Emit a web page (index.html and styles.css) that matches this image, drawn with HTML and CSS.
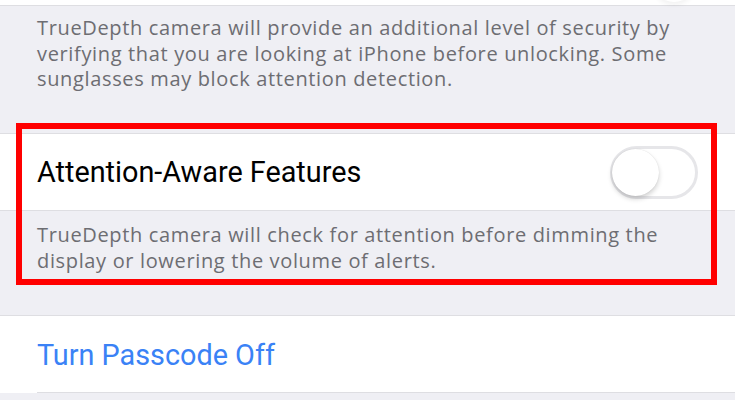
FILE: index.html
```html
<!DOCTYPE html>
<html>
<head>
<meta charset="utf-8">
<link rel="stylesheet" href="styles.css">
</head>
<body>
<div class="screen">
  <div class="top-cell"><span class="ghost-knob"></span></div>
  <p class="footer footer-first">TrueDepth camera will provide an additional level of security by verifying that you are looking at iPhone before unlocking. Some sunglasses may block attention detection.</p>
  <div class="cell cell-toggle">
    <span class="label">Attention-Aware Features</span>
    <span class="switch"><span class="knob"></span></span>
  </div>
  <p class="footer footer-second">TrueDepth camera will check for attention before dimming the display or lowering the volume of alerts.</p>
  <div class="cell cell-action">
    <span class="label link">Turn Passcode Off</span>
  </div>
  <div class="highlight"></div>
</div>
</body>
</html>
```
FILE: styles.css
```css
html, body {
  margin: 0;
  padding: 0;
  background: #efeff4;
}
.screen {
  position: relative;
  width: 735px;
  height: 400px;
  overflow: hidden;
  font-family: "Roboto", "Liberation Sans", sans-serif;
}
.top-cell {
  position: relative;
  height: 5px;
  background: #fff;
  border-bottom: 1px solid #dedee2;
}
.ghost-knob {
  position: absolute;
  left: 652px;
  top: -42px;
  width: 44px;
  height: 44px;
  border-radius: 50%;
  box-shadow: 0 3px 5px rgba(0,0,0,0.05);
}
.footer {
  margin: 0;
  padding: 0 50px 0 37px;
  color: #6d6d72;
  font-family: "Open Sans", "Roboto", sans-serif;
  font-size: 20px;
  letter-spacing: 0.65px;
  line-height: 25.5px;
}
.footer-first {
  padding-top: 9px;
  height: 118px;
}
.cell {
  position: relative;
  display: flex;
  align-items: center;
  background: #fff;
  border-top: 1px solid #dedee2;
  padding-left: 37px;
}
.cell-toggle {
  height: 76px;
  border-bottom: 1px solid #dedee2;
  padding-right: 37px;
  justify-content: space-between;
}
.label {
  font-size: 28.8px;
  color: #000;
}
.link {
  color: #3a82f6;
}
.switch {
  position: relative;
  width: 82px;
  height: 47px;
  border: 3px solid #e6e6e9;
  border-radius: 27px;
  background: #fff;
}
.knob {
  position: absolute;
  left: -1px;
  top: 0;
  width: 47px;
  height: 47px;
  border-radius: 50%;
  background: #fff;
  box-shadow: 0 3px 5px rgba(0,0,0,0.18), 0 0 1px rgba(0,0,0,0.15);
}
.footer-second {
  padding-top: 11px;
  height: 93px;
}
.cell-action {
  height: 77px;
}
.cell-action::before {
  content: "";
  position: absolute;
  left: 37px;
  right: 0;
  bottom: 0;
  height: 1px;
  background: #dedee2;
}
.highlight {
  position: absolute;
  left: 16px;
  top: 123px;
  width: 689px;
  height: 150px;
  border: 6px solid #ff0000;
}
```
